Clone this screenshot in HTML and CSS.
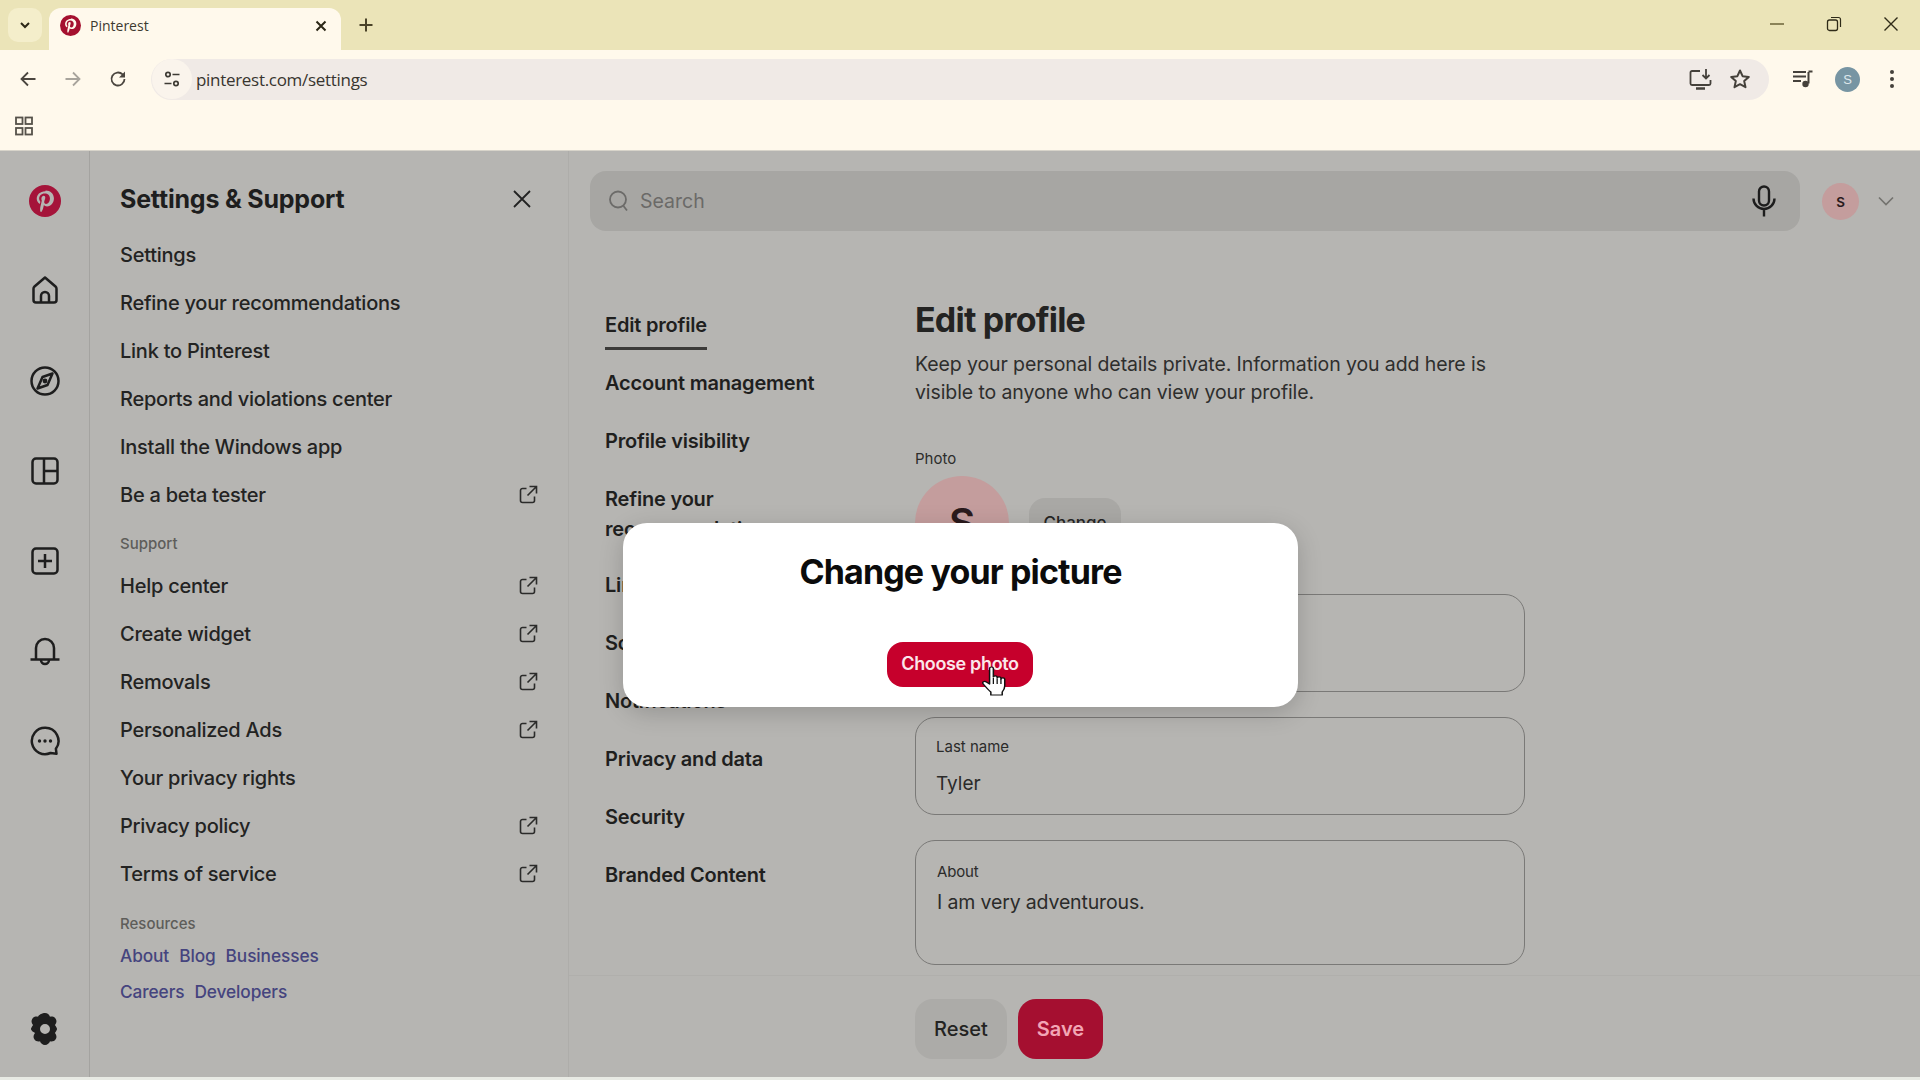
FILE: index.html
```html
<!DOCTYPE html>
<html lang="en">
<head>
<meta charset="utf-8">
<title>Pinterest</title>
<link rel="stylesheet" href="styles.css">
</head>
<body>
<svg class="defs" width="0" height="0" aria-hidden="true">
  <symbol id="ext" viewBox="0 0 20 20"><path d="M8.500 3.500H4.500a2 2 0 0 0-2 2v10a2 2 0 0 0 2 2h10a2 2 0 0 0 2-2v-4M11.500 1.500h7v7M18.500 1.500l-9 9" fill="none" stroke="currentColor" stroke-width="1.600"/></symbol>
  <symbol id="pin" viewBox="0 0 24 24"><circle cx="12" cy="12" r="12" fill="currentColor"/><path d="M12.300 4.600c-4.200 0-6.500 2.800-6.500 5.700 0 1.400.8 3.100 2 3.700.2.100.3 0 .4-.2l.3-1.100c0-.2 0-.3-.1-.4-.4-.5-.8-1.300-.8-2.100 0-2 1.500-3.900 4.200-3.900 2.300 0 3.900 1.500 3.900 3.700 0 2.500-1.200 4.200-2.900 4.200-.9 0-1.600-.8-1.400-1.700.3-1.100.8-2.300.8-3.100 0-.7-.4-1.300-1.200-1.300-.9 0-1.700 1-1.700 2.300 0 .8.3 1.400.3 1.400l-1.100 4.700c-.2.900-.1 2.500-.1 3.300l.9.400c.4-.7 1.100-2 1.300-2.800l.6-2.400c.3.600 1.300 1.100 2.300 1.100 3 0 5.200-2.800 5.200-6.200 0-3.300-2.700-5.800-6.200-5.800z" fill="var(--pin-fg)"/></symbol>
</svg>

<header class="tabstrip">
  <button class="tab-menu"><svg width="14" height="14" viewBox="0 0 14 14"><path d="M3 5l4 4 4-4" fill="none" stroke="#2b2716" stroke-width="2"/></svg></button>
  <div class="tab">
    <svg class="tab-pin" width="21" height="21"><use href="#pin"/></svg>
    <span class="tab-title">Pinterest</span>
    <svg class="tab-x" width="14" height="14" viewBox="0 0 14 14"><path d="M2.500 2.500l9 9M11.500 2.500l-9 9" stroke="#2b2716" stroke-width="2"/></svg>
  </div>
  <svg class="tab-plus" width="16" height="16" viewBox="0 0 16 16"><path d="M8 1.500v13M1.500 8h13" stroke="#4a4328" stroke-width="2"/></svg>
  <div class="win-controls">
    <svg width="18" height="18" viewBox="0 0 18 18"><path d="M2 9h14" stroke="#6b6339" stroke-width="1.500"/></svg>
    <svg width="18" height="18" viewBox="0 0 18 18"><rect x="2.500" y="5" width="10" height="10.500" rx="2" fill="none" stroke="#2f2b18" stroke-width="1.300"/><path d="M6 2.500h7.500a2 2 0 0 1 2 2V12" fill="none" stroke="#2f2b18" stroke-width="1.200"/></svg>
    <svg width="18" height="18" viewBox="0 0 18 18"><path d="M2.500 2.500l13 13M15.500 2.500l-13 13" stroke="#2f2b18" stroke-width="1.400"/></svg>
  </div>
</header>

<div class="toolbar">
  <svg class="tb-icon" width="18" height="18" viewBox="0 0 18 18"><path d="M16.500 9H2.500M9 2.500L2.500 9 9 15.500" fill="none" stroke="#4b463f" stroke-width="1.800"/></svg>
  <svg class="tb-icon" width="18" height="18" viewBox="0 0 18 18"><path d="M1.500 9h14M9 2.500L15.500 9 9 15.500" fill="none" stroke="#a8a49c" stroke-width="1.800"/></svg>
  <svg class="tb-icon" width="18" height="18" viewBox="0 0 18 18"><path d="M15.500 9a6.500 6.500 0 1 1-1.900-4.600L15.500 6.300" fill="none" stroke="#4b463f" stroke-width="1.800"/><path d="M16 1.500v6h-6z" fill="#4b463f"/></svg>
  <div class="omnibox">
    <span class="omni-chip"><svg width="18" height="18" viewBox="0 0 18 18"><g fill="none" stroke="#3d3a34" stroke-width="1.700"><circle cx="5" cy="4.500" r="2.200"/><circle cx="13" cy="13.500" r="2.200"/><path d="M9.500 4.500h7M1.500 13.500h7"/></g></svg></span>
    <span class="omni-url">pinterest.com/settings</span>
    <svg class="omni-install" width="23" height="22" viewBox="0 0 23 22"><path d="M11 3H3a1.500 1.500 0 0 0-1.500 1.500v11A1.500 1.500 0 0 0 3 17h17a1.500 1.500 0 0 0 1.500-1.500V12" fill="none" stroke="#45413b" stroke-width="1.800"/><path d="M7 20.500h9" stroke="#45413b" stroke-width="2.500"/><path d="M17 1v9M13.500 7l3.500 3.500L20.500 7" fill="none" stroke="#45413b" stroke-width="1.800"/></svg>
    <svg class="omni-star" width="22" height="22" viewBox="0 0 22 22"><path d="M11 2.500l2.600 5.700 6.200.7-4.600 4.200 1.300 6.100L11 16.200l-5.500 3 1.300-6.100-4.600-4.200 6.200-.7z" fill="none" stroke="#45413b" stroke-width="2" stroke-linejoin="round"/></svg>
  </div>
  <svg class="tb-media" width="22" height="20" viewBox="0 0 22 20"><path d="M1 3h13M1 7.500h13M1 12h8" stroke="#45413b" stroke-width="1.800"/><path d="M16.500 3v11.500" stroke="#45413b" stroke-width="2"/><path d="M16.500 2.500h4" stroke="#45413b" stroke-width="2"/><circle cx="13.500" cy="15" r="3.200" fill="#45413b"/></svg>
  <span class="tb-avatar">S</span>
  <svg class="tb-dots" width="6" height="20" viewBox="0 0 6 20"><circle cx="3" cy="3" r="2" fill="#45413b"/><circle cx="3" cy="10" r="2" fill="#45413b"/><circle cx="3" cy="17" r="2" fill="#45413b"/></svg>
</div>

<div class="bookmarks">
  <svg width="18" height="20" viewBox="0 0 18 20"><g fill="none" stroke="#56524a" stroke-width="1.800"><rect x="1" y="1.500" width="6.500" height="6.500"/><rect x="10.500" y="1.500" width="6.500" height="6.500"/><rect x="1" y="12" width="6.500" height="6.500"/><rect x="10.500" y="12" width="6.500" height="6.500"/></g></svg>
</div>

<main class="app">
  <nav class="rail">
    <svg class="rail-logo" width="32" height="36"><use href="#pin"/></svg>
    <svg class="rail-icon" width="30" height="30" viewBox="0 0 30 30"><path d="M15 2.500L4.500 11.500a3 3 0 0 0-1 2.300V25a2.500 2.500 0 0 0 2.500 2.500h18a2.500 2.500 0 0 0 2.500-2.500V13.800a3 3 0 0 0-1-2.300z" fill="none" stroke="currentColor" stroke-width="2.500" stroke-linejoin="round"/><path d="M11 27v-6a4 4 0 0 1 8 0v6" fill="none" stroke="currentColor" stroke-width="2.500"/></svg>
    <svg class="rail-icon" width="30" height="30" viewBox="0 0 30 30"><circle cx="15" cy="15" r="13.500" fill="none" stroke="currentColor" stroke-width="2.500"/><path d="M22.500 7.500l-10 3.500-5 11.500 10-3.500z" fill="none" stroke="currentColor" stroke-width="2.500" stroke-linejoin="round"/><circle cx="15" cy="15" r="2.400" fill="currentColor"/></svg>
    <svg class="rail-icon" width="30" height="30" viewBox="0 0 30 30"><rect x="2.500" y="2.500" width="25" height="25" rx="3.500" fill="none" stroke="currentColor" stroke-width="2.500"/><path d="M14 2.500v25M14 15h13.500" stroke="currentColor" stroke-width="2.500"/></svg>
    <svg class="rail-icon" width="30" height="30" viewBox="0 0 30 30"><rect x="2.500" y="2.500" width="25" height="25" rx="3.500" fill="none" stroke="currentColor" stroke-width="2.500"/><path d="M15 8v14M8 15h14" stroke="currentColor" stroke-width="2.500"/></svg>
    <svg class="rail-icon" width="32" height="30" viewBox="0 0 32 30"><path d="M7 23V12a9 9 0 0 1 18 0v11" fill="none" stroke="currentColor" stroke-width="2.500"/><path d="M1.500 23.500h29" stroke="currentColor" stroke-width="2.500"/><path d="M12 24a4 4 0 0 0 8 0" fill="none" stroke="currentColor" stroke-width="2.500"/></svg>
    <svg class="rail-icon" width="30" height="30" viewBox="0 0 30 30"><path d="M15 1.800a13.200 13.200 0 1 0 5.500 25.200l6 .8-.6-5A13.200 13.200 0 0 0 15 1.800z" fill="none" stroke="currentColor" stroke-width="2.500" stroke-linejoin="round"/><circle cx="9.500" cy="15" r="1.700" fill="currentColor"/><circle cx="15" cy="15" r="1.700" fill="currentColor"/><circle cx="20.500" cy="15" r="1.700" fill="currentColor"/></svg>
    <svg class="rail-gear" width="30" height="32" viewBox="0 0 30 32"><path fill-rule="evenodd" fill="currentColor" d="M15 0c2.500 0 4.300 1.700 5 3.700 2-.5 4.500 0 5.800 2.300 1.300 2.200.5 4.500-.9 6 1.400 1.700 2.100 3.400 2.100 4s-.7 2.300-2.100 4c1.400 1.500 2.200 3.800.9 6-1.300 2.300-3.800 2.800-5.800 2.300-.7 2-2.500 3.700-5 3.700s-4.300-1.700-5-3.700c-2 .5-4.500 0-5.800-2.300-1.300-2.200-.5-4.500.9-6C1.700 18.300 1 16.600 1 16s.7-2.300 2.100-4C1.700 10.500.9 8.200 2.200 6 3.500 3.700 6 3.200 8 3.700 8.700 1.700 12.500 0 15 0zm0 11a5 5 0 1 0 0 10 5 5 0 0 0 0-10z"/></svg>
  </nav>

  <aside class="side">
    <div class="side-head">
      <h2 class="side-title">Settings &amp; Support</h2>
      <svg width="18" height="18" viewBox="0 0 18 18"><path d="M1 1l16 16M17 1L1 17" stroke="#222" stroke-width="1.800"/></svg>
    </div>
    <ul class="side-list">
      <li class="side-item">Settings</li>
      <li class="side-item">Refine your recommendations</li>
      <li class="side-item">Link to Pinterest</li>
      <li class="side-item">Reports and violations center</li>
      <li class="side-item">Install the Windows app</li>
      <li class="side-item">Be a beta tester<svg class="ext" width="20" height="20"><use href="#ext"/></svg></li>
    </ul>
    <div class="side-label">Support</div>
    <ul class="side-list">
      <li class="side-item">Help center<svg class="ext" width="20" height="20"><use href="#ext"/></svg></li>
      <li class="side-item">Create widget<svg class="ext" width="20" height="20"><use href="#ext"/></svg></li>
      <li class="side-item">Removals<svg class="ext" width="20" height="20"><use href="#ext"/></svg></li>
      <li class="side-item">Personalized Ads<svg class="ext" width="20" height="20"><use href="#ext"/></svg></li>
      <li class="side-item">Your privacy rights</li>
      <li class="side-item">Privacy policy<svg class="ext" width="20" height="20"><use href="#ext"/></svg></li>
      <li class="side-item">Terms of service<svg class="ext" width="20" height="20"><use href="#ext"/></svg></li>
    </ul>
    <div class="side-label side-label-res">Resources</div>
    <div class="res-links"><a>About</a><a>Blog</a><a>Businesses</a></div>
    <div class="res-links"><a>Careers</a><a>Developers</a></div>
  </aside>

  <section class="content">
    <div class="topbar">
      <div class="search">
        <svg width="22" height="24" viewBox="0 0 22 24"><circle cx="10" cy="10.500" r="8" fill="none" stroke="#6c6b69" stroke-width="1.800"/><path d="M15.500 17l3.500 4.500" stroke="#6c6b69" stroke-width="1.800"/></svg>
        <span class="search-text">Search</span>
        <svg class="mic" width="24" height="32" viewBox="0 0 24 32"><rect x="7" y="1.500" width="10" height="19" rx="5" fill="none" stroke="#1d1d1d" stroke-width="2.400"/><path d="M1.500 13.500a10.500 10.500 0 0 0 21 0M12 24v7.500" fill="none" stroke="#1d1d1d" stroke-width="2.400"/></svg>
      </div>
      <span class="user-chip">s</span>
      <svg width="16" height="10" viewBox="0 0 16 10"><path d="M1 1.500l7 7 7-7" fill="none" stroke="#74736f" stroke-width="1.700"/></svg>
    </div>

    <div class="columns">
      <nav class="tabs">
        <div class="tabs-item tabs-active"><span>Edit profile</span></div>
        <div class="tabs-item">Account management</div>
        <div class="tabs-item">Profile visibility</div>
        <div class="tabs-item tabs-tall">Refine your<br>recommendations</div>
        <div class="tabs-item">Link to Pinterest</div>
        <div class="tabs-item">Social permissions</div>
        <div class="tabs-item">Notifications</div>
        <div class="tabs-item">Privacy and data</div>
        <div class="tabs-item">Security</div>
        <div class="tabs-item">Branded Content</div>
      </nav>

      <div class="form">
        <h1 class="form-title">Edit profile</h1>
        <p class="form-lead">Keep your personal details private. Information you add here is visible to anyone who can view your profile.</p>
        <div class="photo-label">Photo</div>
        <div class="photo-row">
          <span class="photo">S</span>
          <span class="photo-btn">Change</span>
        </div>
        <div class="field field-first"><label>First name</label><div>Sam</div></div>
        <div class="field"><label>Last name</label><div>Tyler</div></div>
        <div class="field field-about"><label>About</label><div>I am very adventurous.</div></div>
      </div>
    </div>

    <div class="actions">
      <span class="btn btn-reset">Reset</span>
      <span class="btn btn-save">Save</span>
    </div>
  </section>

  <div class="modal">
    <h2 class="modal-title">Change your picture</h2>
    <span class="modal-btn">Choose photo</span>
  </div>
  <svg class="hand" width="24" height="31" viewBox="1 0 19 31" preserveAspectRatio="none"><path d="M7 2.500c0-2 3-2 3 0V11c0-1.500 3-1.500 3 0v1c0-1.500 3-1.500 3 0v1c0-1.500 3-1.500 3 0v7c0 3-1 4.500-2 6v3H8v-3c-2-2-4-5-6-8-1.500-2 1-3.500 2.500-2L7 18z" fill="#fff" stroke="#111" stroke-width="1.200" stroke-linejoin="round"/><path d="M10 12v6M13 12.500v5.500M16 13v5" stroke="#111" stroke-width="1"/></svg>
</main>
<div class="page-end"></div>
</body>
</html>
```
FILE: styles.css
```css
* { box-sizing: border-box; }
html, body { height: 100%; }
body {
  margin: 0;
  height: 1080px;
  overflow: hidden;
  display: flex;
  flex-direction: column;
  font-family: Inter, "Liberation Sans", sans-serif;
  color: #1d1d1b;
  background: #b6b5b2;
  --pin-fg: #fff;
}
.defs { position: absolute; }
h1, h2, p, ul { margin: 0; padding: 0; }
ul { list-style: none; }
button { border: 0; padding: 0; font: inherit; }

/* browser chrome */
.tabstrip {
  height: 50px;
  flex: none;
  display: flex;
  align-items: flex-end;
  padding-left: 8px;
  background: #ebe4b8;
}
.tab-menu {
  width: 34px;
  height: 34px;
  margin-bottom: 8px;
  border-radius: 10px;
  background: #f4eecb;
  display: flex;
  align-items: center;
  justify-content: center;
}
.tab {
  width: 292px;
  height: 42px;
  margin-left: 7px;
  padding: 0 13px 7px 11px;
  border-radius: 12px 12px 0 0;
  background: #fff9ec;
  display: flex;
  align-items: center;
  color: #a5102f;
  --pin-fg: #fff9ec;
}
.tab-pin { flex: none; }
.tab-title {
  margin-left: 9px;
  flex: 1;
  font: 14px "Open Sans", sans-serif;
  color: #3d3a30;
}
.tab-plus { margin: 0 0 17px 17px; }
.win-controls {
  margin-left: auto;
  height: 50px;
  width: 152px;
  padding: 0 20px 2px 0;
  display: flex;
  align-items: center;
  justify-content: space-between;
  align-self: flex-start;
}
.toolbar {
  height: 50px;
  flex: none;
  display: flex;
  align-items: center;
  padding: 8px 0 0 19px;
  background: #fff9ec;
}
.tb-icon { flex: none; margin-right: 27px; }
.tb-icon:nth-child(3) { margin-right: 24px; }
.omnibox {
  width: 1618px;
  height: 41px;
  border-radius: 21px;
  background: #f0eae6;
  display: flex;
  align-items: center;
  padding-right: 18px;
}
.omni-chip {
  width: 40px;
  height: 40px;
  flex: none;
  margin-left: 1px;
  border-radius: 50%;
  background: #faf4ec;
  display: flex;
  align-items: center;
  justify-content: center;
}
.omni-url {
  margin-left: 4px;
  flex: 1;
  font: 17px "Open Sans", sans-serif;
  letter-spacing: -0.3px;
  color: #38352f;
}
.omni-install { margin-right: 17px; }
.tb-media { margin-left: 23px; flex: none; }
.tb-avatar {
  width: 25px;
  height: 25px;
  flex: none;
  margin-left: 21px;
  border-radius: 50%;
  background: #7795a3;
  color: #dfe8ec;
  font: 13px/25px "Liberation Sans", sans-serif;
  text-align: center;
}
.tb-dots { margin-left: 29px; flex: none; }
.bookmarks {
  height: 51px;
  flex: none;
  padding: 2px 0 0 15px;
  display: flex;
  align-items: center;
  background: #fff9ec;
  border-bottom: 1px solid #d8d4ca;
}

/* page */
.app {
  flex: 1;
  min-height: 0;
  position: relative;
  display: flex;
  background: #b6b5b2;
}
.page-end { height: 3px; flex: none; background: #e8eae4; }

.rail {
  width: 90px;
  flex: none;
  display: flex;
  flex-direction: column;
  align-items: center;
  padding: 32px 0 32px;
  border-right: 1px solid #a4a3a0;
  color: #1e1e1e;
}
.rail-logo { color: #a5143a; --pin-fg: #b6b5b2; }
.rail-icon { flex: none; margin-top: 60px; }
.rail-logo + .rail-icon { margin-top: 56px; margin-bottom: 1px; }
.rail-gear { margin-top: auto; }

.side {
  width: 479px;
  flex: none;
  padding: 31px 30px 0;
  border-right: 1px solid #aeadaa;
}
.side-head {
  height: 34px;
  display: flex;
  align-items: center;
  justify-content: space-between;
  padding-right: 8px;
  margin-right: -1px;
}
.side-title { font-size: 25px; font-weight: 700; letter-spacing: -0.2px; color: #1e1e1e; }
.side-list { margin-top: 0; }
.side-head + .side-list { margin-top: 15px; }
.side-item {
  height: 48px;
  display: flex;
  align-items: center;
  justify-content: space-between;
  font-size: 20px;
  font-weight: 500;
  letter-spacing: -0.25px;
  color: #232322;
}
.ext { color: #2b2b2a; flex: none; }
.side-label {
  margin-top: 12px;
  height: 26px;
  line-height: 26px;
  font-size: 15px;
  font-weight: 500;
  color: #5e5d5a;
}
.side-label-res { margin-top: 13px; }
.side-label + .side-list { margin-top: 5px; }
.res-links {
  display: flex;
  gap: 10px;
  height: 36px;
  align-items: center;
  font-size: 17.300px;
  font-weight: 500;
  letter-spacing: -0.1px;
  color: #45447e;
}

.content {
  flex: 1;
  min-width: 0;
  display: flex;
  flex-direction: column;
}
.topbar {
  height: 60px;
  margin-top: 20px;
  padding-left: 21px;
  display: flex;
  align-items: center;
  flex: none;
}
.search {
  width: 1210px;
  height: 60px;
  padding: 0 24px 0 18px;
  border-radius: 16px;
  background: #a7a6a3;
  display: flex;
  align-items: center;
  gap: 10px;
}
.search-text { flex: 1; font-size: 19.500px; color: #6b6a68; }
.user-chip {
  width: 37px;
  height: 37px;
  margin: 0 19px 0 22px;
  border-radius: 50%;
  background: #c49d9d;
  color: #2a1a1c;
  font-size: 17px;
  font-weight: 500;
  line-height: 36px;
  text-align: center;
}
.columns {
  flex: 1;
  min-height: 0;
  display: flex;
  overflow: hidden;
}
.tabs { width: 346px; flex: none; padding: 65px 0 0 36px; }
.tabs-item {
  height: 58px;
  display: flex;
  align-items: center;
  font-size: 20px;
  font-weight: 600;
  letter-spacing: -0.2px;
  color: #1f1f1e;
}
.tabs-active span {
  display: block;
  padding: 16px 0 10px;
  margin-top: -4px;
  border-bottom: 3px solid #3c3b39;
}
.tabs-tall { height: 86px; display: block; padding-top: 14px; line-height: 30px; }
.form { width: 610px; flex: none; padding-top: 68px; }
.form-title { font-size: 34px; font-weight: 700; letter-spacing: -0.8px; line-height: 42px; color: #232322; }
.form-lead { margin-top: 9px; font-size: 19.500px; line-height: 28px; color: #2e2e2d; letter-spacing: -0.1px; }
.photo-label { margin-top: 43px; font-size: 15px; line-height: 20px; color: #2d2d2c; }
.photo-row { display: flex; align-items: center; gap: 20px; height: 96px; margin-top: 6px; }
.photo {
  width: 94px;
  height: 94px;
  border-radius: 50%;
  background: #c49d9d;
  color: #2a1a1c;
  font-size: 40px;
  font-weight: 600;
  line-height: 94px;
  text-align: center;
}
.photo-btn {
  width: 92px;
  height: 54px;
  border-radius: 16px;
  background: #a9a8a5;
  font-size: 17px;
  font-weight: 500;
  line-height: 50px;
  text-align: center;
  color: #252524;
  position: relative;
  top: 2px;
}
.field {
  height: 98px;
  margin-top: 25px;
  padding: 19px 20px 0;
  border: 1px solid #7a7977;
  border-radius: 20px;
  font-size: 19px;
  color: #2b2b2a;
}
.field label { display: block; font-size: 15px; line-height: 20px; margin-bottom: 15px; }
.field-first { margin-top: 23px; }
.field-about { height: 125px; padding-top: 21px; padding-left: 21px; font-size: 19.500px; letter-spacing: -0.15px; }
.field-about label { margin-bottom: 8px; }
.actions {
  height: 102px;
  flex: none;
  padding: 23px 0 0 346px;
  display: flex;
  gap: 11px;
  border-top: 1px solid #b0afac;
}
.btn {
  height: 60px;
  border-radius: 18px;
  font-size: 20px;
  font-weight: 500;
  line-height: 60px;
  text-align: center;
}
.btn-reset { width: 92px; background: #acaba8; color: #232322; }
.btn-save { width: 85px; background: #a50f30; color: #f2a6b5; font-weight: 600; }

/* modal */
.modal {
  position: absolute;
  left: 623px;
  top: 372px;
  width: 675px;
  height: 184px;
  border-radius: 24px;
  background: #fff;
  box-shadow: 0 6px 24px rgba(0, 0, 0, .18);
  display: flex;
  flex-direction: column;
  align-items: center;
  padding-top: 27px;
}
.modal-title { font-size: 34px; font-weight: 700; line-height: 44px; letter-spacing: -0.85px; color: #0b0b0b; }
.modal-btn {
  margin: 48px 1px 0 0;
  width: 146px;
  height: 45px;
  border-radius: 16px;
  background: #c6002c;
  color: #fbe6ea;
  font-size: 18px;
  font-weight: 600;
  line-height: 44px;
  letter-spacing: -0.35px;
  text-align: center;
}
.hand { position: absolute; left: 982px; top: 515px; }
```
